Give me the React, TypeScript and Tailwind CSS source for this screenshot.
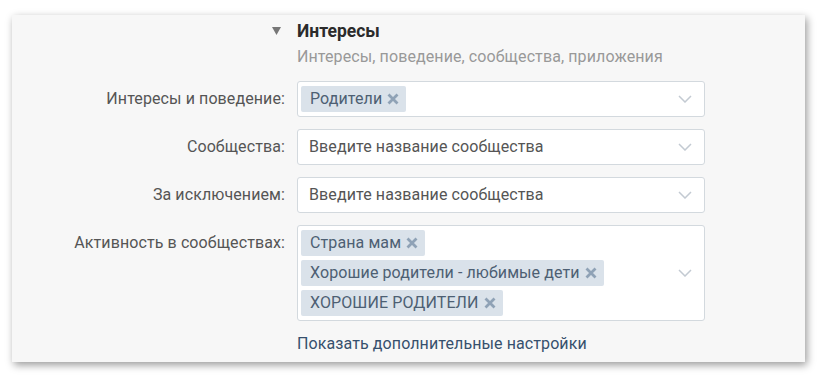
import React from "react";

const font = { fontFamily: "Roboto, 'Noto Sans', sans-serif" };

function Chevron() {
  return (
    <svg width="14" height="8" viewBox="0 0 14 8" className="shrink-0">
      <path d="M1 1l6 6 6-6" fill="none" stroke="#c3cad2" strokeWidth="1.5" />
    </svg>
  );
}

function Tag({ text }: { text: string }) {
  return (
    <span className="inline-flex h-[26px] items-center rounded-[2px] bg-[#dae2ea] pl-[9px] pr-[7px] text-[16px] tracking-[0.1px] text-[#4d5f73]">
      {text}
      <svg width="12" height="12" viewBox="0 0 12 12" className="ml-[5px]">
        <path d="M1.5 1.5l9 9M10.5 1.5l-9 9" stroke="#8fa2b6" strokeWidth="2.8" strokeLinecap="butt" />
      </svg>
    </span>
  );
}

function Label({ text }: { text: string }) {
  return <div className="flex h-[36px] items-center justify-end text-[16px] tracking-[0.1px] text-[#555]">{text}</div>;
}

function Box({ children }: { children: React.ReactNode }) {
  return (
    <div className="flex min-h-[36px] items-center rounded-[3px] border border-[#d3d9de] bg-white pl-[3px] pr-[12px]">
      <div className="flex flex-1 flex-col items-start gap-[4px] py-[4px]">{children}</div>
      <Chevron />
    </div>
  );
}

function Placeholder({ text }: { text: string }) {
  return <span className="h-[26px] pl-[8px] text-[16px] leading-[26px] tracking-[0.1px] text-[#555]">{text}</span>;
}

export default function App() {
  return (
    <div className="h-[380px] w-[820px] bg-white pl-[12px] pt-[15px]" style={font}>
      <div className="h-[347px] w-[793px] bg-[#f7f7f7] pt-[6px] shadow-[2px_3px_8px_rgba(0,0,0,0.4)]">
        <div className="grid grid-cols-[273px_408px] gap-x-[12px]">
          <div className="flex h-[20px] items-center justify-end pr-[4px]">
            <svg width="9" height="8" viewBox="0 0 9 8">
              <path d="M0 0h9L4.5 8z" fill="#777" />
            </svg>
          </div>
          <div className="text-[17.5px] font-bold leading-[20px] text-[#2b2b2b]">Интересы</div>
          <div />
          <div className="mt-[6px] text-[16px] leading-[20px] tracking-[0.1px] text-[#999]">
            Интересы, поведение, сообщества, приложения
          </div>
        </div>

        <div className="mt-[14px] grid grid-cols-[273px_408px] gap-x-[12px] gap-y-[12px]">
          <Label text="Интересы и поведение:" />
          <Box>
            <Tag text="Родители" />
          </Box>
          <Label text="Сообщества:" />
          <Box>
            <Placeholder text="Введите название сообщества" />
          </Box>
          <Label text="За исключением:" />
          <Box>
            <Placeholder text="Введите название сообщества" />
          </Box>
          <Label text="Активность в сообществах:" />
          <Box>
            <Tag text="Страна мам" />
            <Tag text="Хорошие родители - любимые дети" />
            <Tag text="ХОРОШИЕ РОДИТЕЛИ" />
          </Box>
          <div />
          <div className="mt-[1px] text-[16px] leading-[20px] tracking-[0.1px] text-[#36506d]">
            Показать дополнительные настройки
          </div>
        </div>
      </div>
    </div>
  );
}
